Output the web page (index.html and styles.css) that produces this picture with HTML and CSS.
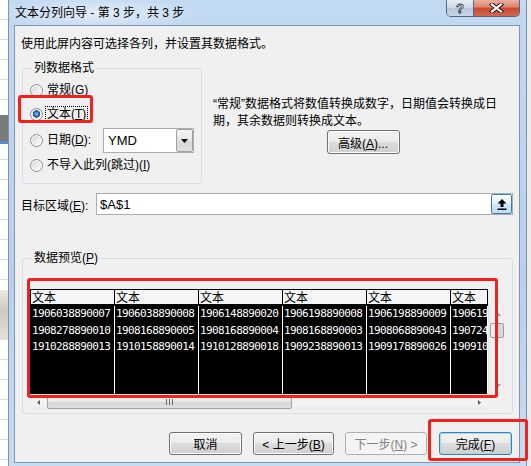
FILE: index.html
```html
<!DOCTYPE html>
<html lang="zh-CN">
  <head>
    <meta charset="UTF-8" />
    <meta name="viewport" content="width=device-width, initial-scale=1.0" />
    <title>文本分列向导</title>
    <link rel="stylesheet" href="styles.css">
  </head>
  <body>
    <div class="screen">
      <div class="sheet-left">
        <div class="sheet-gray"></div>
        <div class="sheet-pic"></div>
      </div>

      <div class="window">
        <div class="titlebar">
          <span class="title">文本分列向导 - 第 3 步，共 3 步</span>
          <div class="caption">
            <span class="cap-help">?</span>
            <span class="cap-close">
              <svg width="15" height="10" viewBox="0 0 15 10">
                <path d="M3 1.5 L12 8.5 M12 1.5 L3 8.5" stroke="#3a1a15" stroke-width="4.2" stroke-linecap="square" fill="none"/>
                <path d="M3 1.5 L12 8.5 M12 1.5 L3 8.5" stroke="#fff" stroke-width="2.2" stroke-linecap="square" fill="none"/>
              </svg>
            </span>
          </div>
        </div>

        <div class="client">
          <p class="intro">使用此屏内容可选择各列，并设置其数据格式。</p>

          <div class="top-row">
            <fieldset class="group format-group">
              <legend>列数据格式</legend>
              <div class="option">
                <span class="radio"></span>
                <span class="option-label">常规(<u>G</u>)</span>
              </div>
              <div class="option option-text">
                <span class="radio checked"></span>
                <span class="option-label focus">文本(<u>T</u>)</span>
              </div>
              <div class="option option-date">
                <span class="radio"></span>
                <span class="option-label">日期(<u>D</u>):</span>
                <div class="select">
                  <span class="select-value">YMD</span>
                  <span class="select-btn">
                    <svg width="7" height="4" viewBox="0 0 7 4"><path d="M0 0 H7 L3.5 4 Z" fill="#000"/></svg>
                  </span>
                </div>
              </div>
              <div class="option option-skip">
                <span class="radio"></span>
                <span class="option-label">不导入此列(跳过)(<u>I</u>)</span>
              </div>
            </fieldset>

            <div class="format-note">
              <p>“常规”数据格式将数值转换成数字，日期值会转换成日<br>期，其余数据则转换成文本。</p>
              <button class="btn btn-advanced">高级(<u>A</u>)...</button>
            </div>
          </div>

          <div class="target-row">
            <label class="target-label">目标区域(<u>E</u>):</label>
            <div class="target-input">
              <span class="target-value">$A$1</span>
              <span class="pick-btn">
                <svg width="10" height="11" viewBox="0 0 10 11">
                  <path d="M5 0 L9.5 4.5 H6.5 V8 H3.5 V4.5 H0.5 Z" fill="#000"/>
                  <rect x="0.5" y="9.5" width="9" height="1.5" fill="#000"/>
                </svg>
              </span>
            </div>
          </div>

          <fieldset class="group preview-group">
            <legend>数据预览(<u>P</u>)</legend>
            <div class="preview">
              <div class="data-table">
                <div class="col">
                  <div class="col-head">文本</div>
                  <div class="col-body">1906038890007<br>1908278890010<br>1910288890013</div>
                </div>
                <div class="col">
                  <div class="col-head">文本</div>
                  <div class="col-body">1906038890008<br>1908168890005<br>1910158890014</div>
                </div>
                <div class="col">
                  <div class="col-head">文本</div>
                  <div class="col-body">1906148890020<br>1908168890004<br>1910128890018</div>
                </div>
                <div class="col">
                  <div class="col-head">文本</div>
                  <div class="col-body">1906198890008<br>1908168890003<br>1909238890013</div>
                </div>
                <div class="col">
                  <div class="col-head">文本</div>
                  <div class="col-body">1906198890009<br>1908068890043<br>1909178890026</div>
                </div>
                <div class="col col-last">
                  <div class="col-head">文本</div>
                  <div class="col-body">190619<br>190724<br>190910</div>
                </div>
              </div>

              <div class="vscroll">
                <span class="arrow">
                  <svg width="5" height="3" viewBox="0 0 5 3"><path d="M2.5 0 L5 3 H0 Z" fill="#9a9a9a"/></svg>
                </span>
                <span class="vthumb"></span>
                <span class="arrow arrow-end">
                  <svg width="5" height="3" viewBox="0 0 5 3"><path d="M0 0 H5 L2.5 3 Z" fill="#9a9a9a"/></svg>
                </span>
              </div>

              <div class="hscroll">
                <span class="arrow">
                  <svg width="3" height="5" viewBox="0 0 3 5"><path d="M0 2.5 L3 0 V5 Z" fill="#606060"/></svg>
                </span>
                <span class="hthumb"><span class="grip"></span></span>
                <span class="arrow arrow-end">
                  <svg width="3" height="5" viewBox="0 0 3 5"><path d="M3 2.5 L0 0 V5 Z" fill="#606060"/></svg>
                </span>
              </div>
            </div>
          </fieldset>

          <div class="actions">
            <button class="btn btn-cancel">取消</button>
            <button class="btn btn-back">&lt; 上一步(<u>B</u>)</button>
            <button class="btn btn-next" disabled>下一步(<u>N</u>) &gt;</button>
            <button class="btn btn-finish">完成(<u>F</u>)</button>
          </div>
        </div>
      </div>

      <div class="sheet-right"></div>

      <div class="mark mark-option"></div>
      <div class="mark mark-preview"></div>
      <div class="mark mark-finish"></div>
    </div>
  </body>
</html>
```

FILE: styles.css
```css
* {
  box-sizing: border-box;
}

body {
  margin: 0;
  font-family: "Liberation Sans", "Noto Sans CJK SC", sans-serif;
  font-size: 12px;
  color: #000;
  background: #fff;
}

.screen {
  position: relative;
  display: flex;
  width: 531px;
  height: 466px;
  overflow: hidden;
}

/* bits of the spreadsheet behind the dialog */
.sheet-left {
  flex: none;
  width: 8px;
  background: repeating-linear-gradient(to bottom, #fff 0 19px, #dcdee1 19px 20px);
}

.sheet-gray {
  margin-top: 115px;
  height: 29px;
  background: #7b7b7b;
  border-bottom: 3px solid #5a8ac0;
}

.sheet-pic {
  margin-top: 146px;
  height: 50px;
  background: linear-gradient(#ece9e3, #cfc9c0 40%, #e6e1d8);
}

.sheet-right {
  flex: 1;
  background: #ebebeb;
}

/* window frame */
.window {
  flex: none;
  display: flex;
  flex-direction: column;
  width: 519px;
  border-left: 1px solid #7f93ab;
  border-right: 1px solid #7f93ab;
  background: linear-gradient(to bottom, #c2d9f2, #b7d1ed 60%, #c6dcf2);
}

.titlebar {
  display: flex;
  height: 25px;
  padding-left: 6px;
  background: radial-gradient(ellipse 110px 16px at 88px 13px, rgba(255, 255, 255, 0.55), rgba(255, 255, 255, 0));
}

.title {
  flex: 1;
  padding-top: 1px;
  line-height: 24px;
}

.caption {
  display: flex;
  height: 17px;
  margin-right: 6px;
  border: 1px solid #56667c;
  border-top: none;
  border-radius: 0 0 5px 5px;
  overflow: hidden;
}

.cap-help {
  width: 26px;
  display: flex;
  align-items: center;
  justify-content: center;
  background: linear-gradient(#e6edf5, #cdd9e6 50%, #b6c7da 50%, #c6d6e7);
  color: #fff;
  font-weight: bold;
  font-size: 13px;
  -webkit-text-stroke: 0.8px #2c394a;
}

.cap-close {
  width: 46px;
  display: flex;
  align-items: center;
  justify-content: center;
  border-left: 1px solid #56667c;
  background: linear-gradient(#eab0a2, #da826e 45%, #c94a33 50%, #d4664c);
}

.client {
  height: 438px;
  margin: 0 6px 0 5px;
  padding: 0 6px;
  border: 1px solid #8196ae;
  background: #f0f0f0;
}

.intro {
  margin: 10px 0 0;
  line-height: 16px;
}

/* group boxes */
.group {
  margin: 0 0 0 1px;
  padding: 0;
  border: 1px solid #d5dfe5;
  border-radius: 3px;
  min-width: 0;
}

.group legend {
  margin-left: 2px;
  padding: 0 2px;
  line-height: 16px;
}

.top-row {
  display: flex;
  align-items: flex-start;
  margin-top: 8px;
}

.format-group {
  flex: none;
  width: 180px;
  padding: 2px 0 6px 7px;
}

.option {
  display: flex;
  align-items: center;
  height: 24px;
}

.option-text {
  height: 25px;
}

.option-date {
  height: 27px;
}

.option-skip {
  height: 23px;
}

.radio {
  flex: none;
  width: 13px;
  height: 13px;
  border: 1px solid #8e8f8f;
  border-radius: 50%;
  background: linear-gradient(135deg, #d4d4d4, #f4f4f4 70%, #fff);
  box-shadow: inset 0 0 0 1px #f8f8f8;
}

.radio.checked {
  background: radial-gradient(circle at 50% 45%, #8fd0f7 0, #2b7fc8 2px, #134f92 3.5px, rgba(0, 0, 0, 0) 4px),
    linear-gradient(135deg, #d4d4d4, #f4f4f4 70%, #fff);
}

.option-label {
  margin-left: 4px;
  line-height: 15px;
}

.focus {
  margin-left: 3px;
  padding: 0 1px;
  outline: 1px dotted #000;
}

.select {
  display: flex;
  width: 91px;
  height: 25px;
  margin-left: 12px;
  border: 1px solid #abadb3;
  background: #fff;
}

.select-value {
  flex: 1;
  padding-left: 4px;
  line-height: 23px;
  font-size: 13px;
}

.select-btn {
  width: 17px;
  display: flex;
  align-items: center;
  justify-content: center;
  border: 1px solid #a0a0a0;
  border-radius: 2px;
  background: linear-gradient(#f4f4f4, #e6e6e6 50%, #d7d7d7 50%, #e1e1e1);
}

.format-note {
  flex: 1;
  margin-left: 11px;
  padding-top: 36px;
}

.format-note p {
  margin: 0;
  line-height: 17px;
}

/* buttons */
.btn {
  height: 23px;
  padding: 0;
  font-family: inherit;
  font-size: 12px;
  color: #000;
  border: 1px solid #707070;
  border-radius: 3px;
  background: linear-gradient(#f2f2f2, #ebebeb 49%, #dddddd 50%, #cfcfcf);
  box-shadow: inset 0 0 0 1px #fbfbfb;
}

.btn-advanced {
  display: block;
  width: 73px;
  height: 24px;
  margin: 0 auto;
}

.target-row {
  display: flex;
  align-items: center;
  height: 22px;
  margin-top: 9px;
}

.target-label {
  width: 75px;
  flex: none;
}

.target-input {
  flex: 1;
  display: flex;
  align-items: center;
  height: 22px;
  border: 1px solid #abadb3;
  background: #fff;
}

.target-value {
  flex: 1;
  padding-left: 3px;
  font-size: 13px;
}

.pick-btn {
  width: 21px;
  height: 20px;
  display: flex;
  align-items: center;
  justify-content: center;
  border: 1px solid #3c7fb1;
  border-radius: 2px;
  background: linear-gradient(#f7fbfe, #e3f1fc 50%, #cfe7fa 50%, #bfdef7);
}

/* data preview */
.preview-group {
  margin-top: 35px;
  padding: 23px 0 3px 7px;
}

.preview {
  display: grid;
  grid-template-columns: 458px 16px;
  grid-template-rows: 105px 16px;
}

.data-table {
  display: flex;
  overflow: hidden;
  border-left: 1px solid #000;
  border-top: 1px solid #000;
}

.col {
  flex: none;
  width: 84px;
  display: flex;
  flex-direction: column;
}

.col-last {
  width: 37px;
}

.col-head {
  height: 16px;
  padding-left: 1px;
  border-right: 1px solid #000;
  border-bottom: 2px solid #000;
  background: #f5f5f5;
  font-family: "Noto Sans CJK SC", sans-serif;
  line-height: 13px;
}

.col-body {
  flex: 1;
  padding-left: 1px;
  border-right: 1px solid #fff;
  background: #000;
  color: #fff;
  font-family: "DejaVu Sans Mono", monospace;
  font-size: 11px;
  letter-spacing: -0.6px;
  line-height: 16.5px;
  white-space: nowrap;
  overflow: hidden;
}

.vscroll {
  grid-column: 2;
  grid-row: 1;
  display: flex;
  flex-direction: column;
  margin-top: 16px;
  background: linear-gradient(to right, #e4e4e4, #f3f3f3 30%, #f3f3f3 70%, #e9e9e9);
}

.vscroll .arrow {
  height: 18px;
  display: flex;
  align-items: center;
  justify-content: center;
  padding-left: 4px;
}

.vscroll .arrow-end {
  height: 17px;
  margin-top: auto;
}

.vthumb {
  align-self: flex-end;
  width: 14px;
  height: 15px;
  border: 1px solid #9c9c9c;
  border-radius: 2px;
  background: linear-gradient(to right, #f4f4f4, #e6e6e6 50%, #d4d4d4 50%, #dcdcdc);
}

.hscroll {
  grid-column: 1;
  grid-row: 2;
  display: flex;
  background: linear-gradient(#e4e4e4, #f3f3f3 30%, #f3f3f3 70%, #e9e9e9);
}

.hscroll .arrow {
  width: 17px;
  display: flex;
  align-items: center;
  justify-content: center;
}

.hscroll .arrow-end {
  margin-left: auto;
}

.hthumb {
  width: 245px;
  height: 14px;
  margin-top: 1px;
  display: flex;
  align-items: center;
  justify-content: center;
  border: 1px solid #a2a2a2;
  border-radius: 2px;
  background: linear-gradient(#f4f4f4, #e8e8e8 50%, #d6d6d6 50%, #dedede);
}

.grip {
  width: 7px;
  height: 6px;
  background: repeating-linear-gradient(to right, #6a6a6a 0 1px, rgba(0, 0, 0, 0) 1px 3px);
}

.actions {
  display: flex;
  justify-content: flex-end;
  gap: 11px;
  margin-top: 18px;
  padding-right: 1px;
}

.btn-cancel {
  width: 73px;
}

.btn-back {
  width: 81px;
}

.btn-next {
  width: 82px;
  color: #838383;
  border-color: #adb2b5;
  background: #f4f4f4;
  box-shadow: none;
}

.btn-finish {
  width: 73px;
  margin-left: 1px;
  border-color: #3c7fb1;
  box-shadow: inset 0 0 0 1px #9fdcf8;
}

/* red annotation boxes drawn over the screenshot */
.mark {
  position: absolute;
  border: 3px solid #f2211c;
  border-radius: 3px;
}

.mark-option {
  left: 18px;
  top: 95px;
  width: 75px;
  height: 28px;
}

.mark-preview {
  left: 27px;
  top: 278px;
  width: 471px;
  height: 120px;
}

.mark-finish {
  left: 428px;
  top: 419px;
  width: 100px;
  height: 42px;
}
```
